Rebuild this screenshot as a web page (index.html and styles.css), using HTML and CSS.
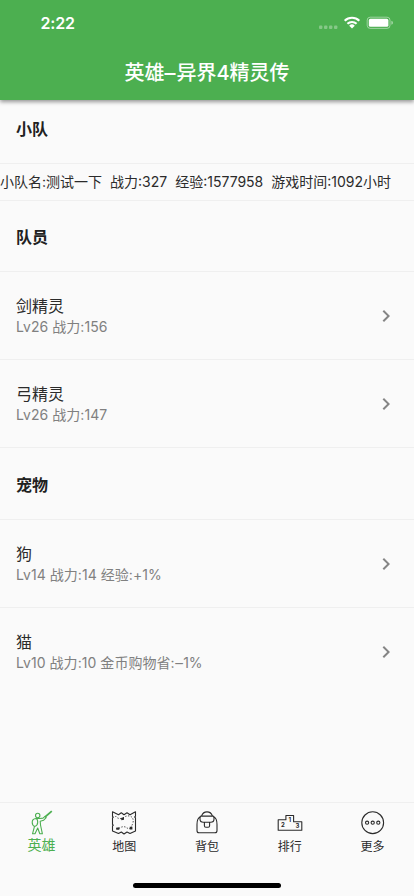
FILE: index.html
```html
<!DOCTYPE html>
<html lang="zh-CN">
<head>
<meta charset="utf-8">
<meta name="viewport" content="width=device-width, initial-scale=1">
<title>英雄–异界4精灵传</title>
<link rel="stylesheet" href="styles.css">
</head>
<body>
<div class="app">
  <header class="appbar">
    <div class="status">
      <span class="time">2:22</span>
      <svg class="status-icons" width="76" height="16" viewBox="0 0 76 16" fill="#fff">
        <g opacity=".32"><rect x="1" y="10.500" width="3.400" height="3.400" rx="1"/><rect x="6" y="10.500" width="3.400" height="3.400" rx="1"/><rect x="11" y="10.500" width="3.400" height="3.400" rx="1"/><rect x="16" y="10.500" width="3.400" height="3.400" rx="1"/></g>
        <g fill="none" stroke="#fff" stroke-width="2.100"><path d="M26.700 5.800a10.400 10.400 0 0 1 14.600 0"/><path d="M29.400 8.800a6.600 6.600 0 0 1 9.200 0"/></g>
        <path d="M31.200 10.700a4 4 0 0 1 5.600 0L34 13.600z"/>
        <rect x="49.200" y="2.200" width="22.800" height="11.200" rx="3" fill="none" stroke="#fff" opacity=".45"/>
        <rect x="50.800" y="3.800" width="19.600" height="8" rx="1.600"/>
        <path d="M73.400 5.800q1.600.600 1.600 2t-1.600 2z" opacity=".5"/>
      </svg>
    </div>
    <h1 class="title">英雄<span class="dash">–</span>异界4精灵传</h1>
  </header>
  <main class="content">
    <h2 class="section section-first">小队</h2>
    <p class="stats"><span>小队名:测试一下</span><span>战力:327</span><span>经验:1577958</span><span>游戏时间:1092小时</span></p>
    <h2 class="section">队员</h2>
    <div class="row"><div><div class="name">剑精灵</div><div class="detail">Lv26 战力:156</div></div><svg class="chevron" viewBox="0 0 24 24"><path d="M10 6 8.590 7.410 13.170 12l-4.580 4.590L10 18l6-6z"/></svg></div>
    <div class="row"><div><div class="name">弓精灵</div><div class="detail">Lv26 战力:147</div></div><svg class="chevron" viewBox="0 0 24 24"><path d="M10 6 8.590 7.410 13.170 12l-4.580 4.590L10 18l6-6z"/></svg></div>
    <h2 class="section">宠物</h2>
    <div class="row"><div><div class="name">狗</div><div class="detail">Lv14 战力:14 经验:+1%</div></div><svg class="chevron" viewBox="0 0 24 24"><path d="M10 6 8.590 7.410 13.170 12l-4.580 4.590L10 18l6-6z"/></svg></div>
    <div class="row row-last"><div><div class="name">猫</div><div class="detail">Lv10 战力:10 金币购物省:<span class="dash">–</span>1%</div></div><svg class="chevron" viewBox="0 0 24 24"><path d="M10 6 8.590 7.410 13.170 12l-4.580 4.590L10 18l6-6z"/></svg></div>
  </main>
  <nav class="tabs">
    <div class="tab active">
      <svg class="icon" viewBox="0 0 26 26"><circle cx="9.700" cy="5.500" r="2.200"/><path d="M8 8.500h3.700l3.300-.4 2-1.700 1.200 1.300-2.500 2.500-3.500 1 .4 4.300 1.800 8.300h-2.600L9.700 18 7 23.800H4.500l2-7.500"/><path d="M8 8.500q-3.800.400-3.800 3.700t2.500 4.200q3-1 3-4.200T8 8.500z"/><path stroke-width="1.700" d="M17 7l6.800-5.800"/></svg>
      <span>英雄</span>
    </div>
    <div class="tab">
      <svg class="icon" viewBox="0 0 26 26"><path d="M1.500 1.800 7.500 4.800 10.300 2.800 13 4.800 16 2.800l3 2 5.500-3v4.400l-.8.800.8.800v13.300L19 23.500 16 22l-3 2-2.700-2-2.800 1.500-6-2.400V16l.8-.8-.8-.8V8l.8-.8-.8-.8z"/><path stroke-dasharray="1.200 1.600" stroke-width="1" d="M4.500 6q1.500 3 7 2.500Q15 5 19.500 6.200q3.500 2 2.500 6.500-1 3-2 4.500M8 18.500q3-2.500 6.500-1.500 2.500 2 5 1.500"/><path class="solid" d="m10 8 3-1v2.700l-2.600.6zM5 17.700l3.300-.5v2.500H5.300zM18.700 16.700h2.700v2.700h-2.700z"/></svg>
      <span>地图</span>
    </div>
    <div class="tab">
      <svg class="icon" viewBox="0 0 26 26"><path d="M7.600 6Q9 1.900 13 1.900T18.400 6M6.500 7Q3 7.800 3 14.500v6q0 2.300 2 2.300h16q2 0 2-2.300v-6Q23 7.800 19.500 7"/><path d="M7 6.100h12q1 0 1 1V9q0 3.300-3.300 3.300H9.300Q6 12.300 6 9V7.100q0-1 1-1zM10.400 12.300v3.500q0 1.400 1.400 1.400h2.400q1.400 0 1.400-1.400v-3.500"/></svg>
      <span>背包</span>
    </div>
    <div class="tab">
      <svg class="icon" viewBox="0 0 26 26"><path d="M1.200 20.300V9.800h7.700V5.500h7.700v6.300h8.200v8.500z"/><g class="numbers"><text x="4" y="16.500">2</text><text x="11.500" y="12">1</text><text x="18.500" y="18">3</text></g></svg>
      <span>排行</span>
    </div>
    <div class="tab">
      <svg class="icon" viewBox="0 0 26 26"><circle cx="12.700" cy="12.700" r="10.900"/><circle cx="7.100" cy="12.700" r="1.600"/><circle cx="12.700" cy="12.700" r="1.600"/><circle cx="18.300" cy="12.700" r="1.600"/></svg>
      <span>更多</span>
    </div>
  </nav>
  <div class="home"></div>
</div>
</body>
</html>
```
FILE: styles.css
```css
* { box-sizing: border-box; }
body {
  margin: 0;
  background: #fafafa;
  color: #2b2b2b;
  font-family: Inter, "Noto Sans CJK SC", sans-serif;
}
.app { display: flex; flex-direction: column; height: 896px; overflow: hidden; }
.appbar {
  height: 100px;
  flex: none;
  background: #4caf50;
  color: #fff;
  box-shadow: 0 2px 4px rgba(0, 0, 0, .4);
}
.status {
  display: flex;
  justify-content: space-between;
  align-items: center;
  height: 44px;
  padding: 2px 21px 0 40.5px;
}
.time { font-size: 16px; font-weight: 600; line-height: 20px; letter-spacing: -.2px; }
.status-icons { display: block; margin-right: -1px; }
.title {
  margin: 0;
  padding-top: 1px;
  font-size: 20px;
  font-weight: 500;
  line-height: 56px;
  text-align: center;
  white-space: nowrap;
}
.dash { display: inline-block; transform: scaleX(1.1); padding: 0 .05em; }
.content { flex: 1; }
.section {
  display: flex;
  align-items: center;
  height: 72px;
  margin: 0;
  padding-left: 16px;
  border-bottom: 1px solid #efefef;
  color: #212121;
  font-size: 16px;
  font-weight: 700;
}
.section-first { height: 64px; padding-bottom: 8px; }
.stats {
  display: flex;
  align-items: center;
  gap: 8px;
  height: 37px;
  margin: 0 0 -1px;
  padding-bottom: 2px;
  border-bottom: 1px solid #efefef;
  font-size: 14px;
  white-space: nowrap;
}
.row {
  display: flex;
  align-items: center;
  justify-content: space-between;
  height: 88px;
  padding: 0 16px;
  border-bottom: 1px solid #efefef;
}
.row > div { padding-top: 2px; }
.row-last { border-bottom-color: transparent; }
.name { font-size: 16px; line-height: 21px; }
.detail { font-size: 14px; line-height: 20px; color: #808080; letter-spacing: .05px; white-space: nowrap; }
.chevron { width: 24px; height: 24px; fill: #858585; }
.tabs {
  display: flex;
  height: 81px;
  border-top: 1px solid #efefef;
}
.tab {
  flex: 1;
  display: flex;
  flex-direction: column;
  align-items: center;
  padding-top: 7px;
  font-size: 12px;
  line-height: 22px;
}
.tab.active { color: #4caf50; font-size: 14px; line-height: 18px; }
.icon {
  width: 26px;
  height: 26px;
  fill: none;
  stroke: currentColor;
  stroke-width: 1.1;
  stroke-linejoin: round;
}
.solid { fill: currentColor; stroke: none; }
.numbers { fill: currentColor; stroke: none; font-size: 6px; font-weight: 700; }
.home {
  width: 148px;
  height: 5px;
  flex: none;
  margin: 0 auto 8px;
  border-radius: 3px;
  background: #000;
}
```
